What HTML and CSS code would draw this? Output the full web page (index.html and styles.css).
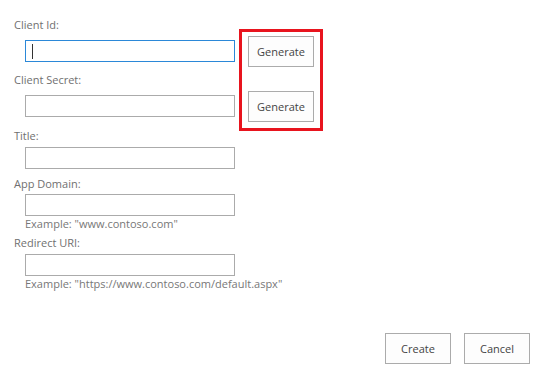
FILE: index.html
```html
<!DOCTYPE html>
<html>
<head>
<meta charset="utf-8">
<link rel="stylesheet" href="styles.css">
</head>
<body>
<div class="form">
  <div class="field f1">
    <div class="label">Client Id:</div>
    <div class="row">
      <div class="input focused"><span class="caret"></span></div>
      <div class="btn gen">Generate</div>
    </div>
  </div>
  <div class="field f2">
    <div class="label">Client Secret:</div>
    <div class="row">
      <div class="input"></div>
      <div class="btn gen">Generate</div>
    </div>
  </div>
  <div class="field f3">
    <div class="label">Title:</div>
    <div class="input"></div>
  </div>
  <div class="field f4">
    <div class="label">App Domain:</div>
    <div class="input"></div>
    <div class="hint">Example: "www.contoso.com"</div>
  </div>
  <div class="field f5">
    <div class="label">Redirect URI:</div>
    <div class="input"></div>
    <div class="hint">Example: "https://www.contoso.com/default.aspx"</div>
  </div>
  <div class="actions">
    <div class="btn act">Create</div>
    <div class="btn act">Cancel</div>
  </div>
  <div class="highlight"></div>
</div>
</body>
</html>
```
FILE: styles.css
```css
html, body {
  margin: 0;
  padding: 0;
  background: #fff;
}
body {
  font-family: "Open Sans", "Noto Sans", sans-serif;
  font-size: 11px;
  color: #666;
}
.form {
  position: relative;
  width: 544px;
  height: 383px;
  padding: 16px 0 0 14px;
  box-sizing: border-box;
}
.label {
  height: 18px;
  line-height: 18px;
  color: #707070;
}
.row {
  display: flex;
  align-items: center;
  height: 30px;
  margin-top: 2px;
}
.input {
  box-sizing: border-box;
  width: 210px;
  height: 22px;
  border: 1px solid #ababab;
  margin-left: 11px;
  background: #fff;
  position: relative;
}
.input.focused {
  border-color: #2b88d8;
}
.caret {
  position: absolute;
  left: 6px;
  top: 3px;
  width: 1px;
  height: 15px;
  background: #333;
}
.btn {
  box-sizing: border-box;
  border: 1px solid #ababab;
  background: #fdfdfd;
  color: #444;
  display: flex;
  align-items: center;
  justify-content: center;
}
.gen {
  width: 66px;
  height: 31px;
  margin-left: 13px;
}
.f2 { margin-top: 5px; }
.f3 { margin-top: 6px; }
.f3 .input, .f4 .input, .f5 .input { margin-top: 2px; }
.f4 { margin-top: 6px; }
.f4 .input { margin-top: 1px; }
.f5 { margin-top: 2px; }
.hint {
  margin-left: 11px;
  height: 16px;
  line-height: 16px;
  color: #777;
}
.actions {
  display: flex;
  justify-content: flex-end;
  gap: 13px;
  padding-right: 14px;
  margin-top: 41px;
}
.act {
  width: 66px;
  height: 31px;
}
.highlight {
  position: absolute;
  left: 239px;
  top: 29px;
  width: 84px;
  height: 102px;
  box-sizing: border-box;
  border: 3px solid #e8141e;
}
```
